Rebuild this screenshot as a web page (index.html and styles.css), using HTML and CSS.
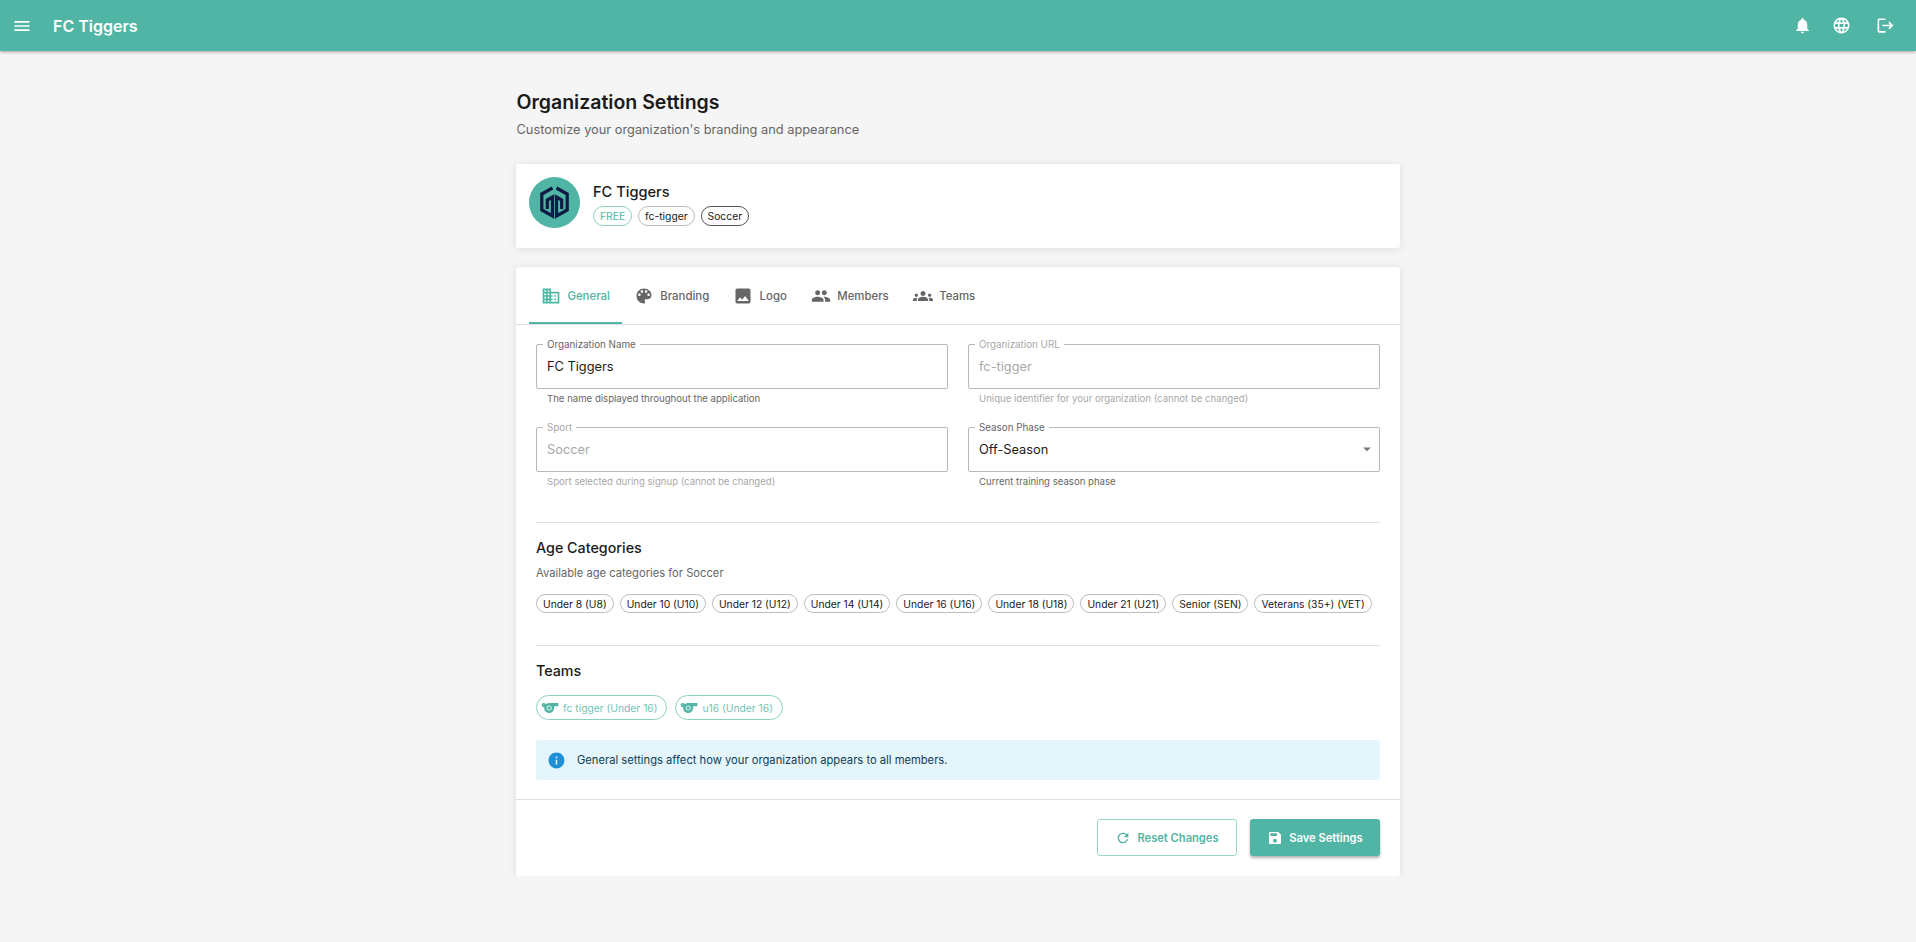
FILE: index.html
```html
<!DOCTYPE html>
<html lang="en">
<head>
  <meta charset="UTF-8">
  <title>Organization Settings</title>
  <link rel="stylesheet" href="styles.css">
</head>
<body>

<header class="appbar">
  <svg class="appbar-menu" viewBox="0 0 24 24"><path d="M3 18h18v-2H3v2zm0-5h18v-2H3v2zm0-7v2h18V6H3z"/></svg>
  <div class="appbar-title">FC Tiggers</div>
  <div class="appbar-actions">
    <svg viewBox="0 0 24 24"><path d="M12 22c1.1 0 2-.9 2-2h-4c0 1.1.89 2 2 2zm6-6v-5c0-3.07-1.64-5.64-4.5-6.32V4c0-.83-.67-1.5-1.5-1.5s-1.5.67-1.5 1.5v.68C7.63 5.36 6 7.92 6 11v5l-2 2v1h16v-1l-2-2z"/></svg>
    <svg viewBox="0 0 24 24"><path d="M11.99 2C6.47 2 2 6.48 2 12s4.47 10 9.99 10C17.52 22 22 17.52 22 12S17.52 2 11.99 2zm6.93 6h-2.95c-.32-1.25-.78-2.45-1.38-3.56 1.84.63 3.37 1.91 4.33 3.56zM12 4.04c.83 1.2 1.48 2.53 1.91 3.96h-3.82c.43-1.43 1.08-2.76 1.91-3.96zM4.26 14C4.1 13.36 4 12.69 4 12s.1-1.36.26-2h3.38c-.08.66-.14 1.32-.14 2 0 .68.06 1.34.14 2H4.26zm.82 2h2.95c.32 1.25.78 2.45 1.38 3.56-1.84-.63-3.37-1.9-4.33-3.56zm2.95-8H5.08c.96-1.66 2.49-2.93 4.33-3.56C8.81 5.55 8.35 6.75 8.03 8zM12 19.96c-.83-1.2-1.48-2.53-1.91-3.96h3.82c-.43 1.43-1.08 2.76-1.91 3.96zM14.34 14H9.66c-.09-.66-.16-1.32-.16-2 0-.68.07-1.35.16-2h4.68c.09.65.16 1.32.16 2 0 .68-.07 1.34-.16 2zm.25 5.56c.6-1.11 1.06-2.31 1.38-3.56h2.95c-.96 1.65-2.49 2.93-4.33 3.56zM16.36 14c.08-.66.14-1.32.14-2 0-.68-.06-1.34-.14-2h3.38c.16.64.26 1.31.26 2s-.1 1.36-.26 2h-3.38z"/></svg>
    <svg class="appbar-logout" viewBox="0 0 24 24"><path d="M17 7l-1.41 1.41L18.17 11H8v2h10.17l-2.58 2.58L17 17l5-5zM4 5h8V3H4c-1.1 0-2 .9-2 2v14c0 1.1.9 2 2 2h8v-2H4V5z"/></svg>
  </div>
</header>

<main class="page">
  <h1 class="page-title">Organization Settings</h1>
  <p class="page-subtitle">Customize your organization's branding and appearance</p>

  <section class="card org-card">
    <div class="org-avatar">
      <svg viewBox="0 0 51 51" fill="none" stroke="#101a45" stroke-width="3.2">
        <path d="M23.5 11 L12.8 17 V33 L23.5 39 V20 L18.3 23 V32"/>
        <path d="M27.5 11 L38.2 17 V33 L27.5 39 V20 L32.7 23 V32"/>
      </svg>
    </div>
    <div class="org-info">
      <div class="org-name">FC Tiggers</div>
      <div class="chip-row">
        <span class="chip chip-free">FREE</span>
        <span class="chip">fc-tigger</span>
        <span class="chip chip-sport">Soccer</span>
      </div>
    </div>
  </section>

  <section class="card settings-card">
    <nav class="tabs">
      <div class="tab active">
        <svg viewBox="0 0 24 24"><path d="M12 7V3H2v18h20V7H12zM6 19H4v-2h2v2zm0-4H4v-2h2v2zm0-4H4V9h2v2zm0-4H4V5h2v2zm4 12H8v-2h2v2zm0-4H8v-2h2v2zm0-4H8V9h2v2zm0-4H8V5h2v2zm10 12h-8v-2h2v-2h-2v-2h2v-2h-2V9h8v10zm-2-8h-2v2h2v-2zm0 4h-2v2h2v-2z"/></svg>
        General
      </div>
      <div class="tab">
        <svg viewBox="0 0 24 24"><path d="M12 3c-4.97 0-9 4.03-9 9s4.03 9 9 9c.83 0 1.5-.67 1.5-1.5 0-.39-.15-.74-.39-1.01-.23-.26-.38-.61-.38-.99 0-.83.67-1.5 1.5-1.5H16c2.76 0 5-2.24 5-5 0-4.42-4.03-8-9-8zm-5.5 9c-.83 0-1.5-.67-1.5-1.5S5.67 9 6.5 9 8 9.67 8 10.5 7.33 12 6.5 12zm3-4C8.67 8 8 7.33 8 6.5S8.67 5 9.5 5s1.5.67 1.5 1.5S10.33 8 9.5 8zm5 0c-.83 0-1.5-.67-1.5-1.5S13.67 5 14.5 5s1.5.67 1.5 1.5S15.33 8 14.5 8zm3 4c-.83 0-1.5-.67-1.5-1.5S16.67 9 17.5 9s1.5.67 1.5 1.5-.67 1.5-1.5 1.5z"/></svg>
        Branding
      </div>
      <div class="tab">
        <svg viewBox="0 0 24 24"><path d="M21 19V5c0-1.1-.9-2-2-2H5c-1.1 0-2 .9-2 2v14c0 1.1.9 2 2 2h14c1.1 0 2-.9 2-2zM8.5 13.5l2.5 3.01L14.5 12l4.5 6H5l3.5-4.5z"/></svg>
        Logo
      </div>
      <div class="tab">
        <svg viewBox="0 0 24 24"><path d="M16 11c1.66 0 2.99-1.34 2.99-3S17.66 5 16 5c-1.66 0-3 1.34-3 3s1.34 3 3 3zm-8 0c1.66 0 2.99-1.34 2.99-3S9.66 5 8 5C6.34 5 5 6.34 5 8s1.34 3 3 3zm0 2c-2.33 0-7 1.17-7 3.5V19h14v-2.5c0-2.33-4.67-3.5-7-3.5zm8 0c-.29 0-.62.02-.97.05 1.16.84 1.97 1.97 1.97 3.45V19h6v-2.5c0-2.33-4.67-3.5-7-3.5z"/></svg>
        Members
      </div>
      <div class="tab">
        <svg viewBox="0 0 24 24"><path d="M12 12.75c1.63 0 3.07.39 4.24.9 1.08.48 1.76 1.56 1.76 2.73V18H6v-1.61c0-1.18.68-2.26 1.76-2.73 1.17-.52 2.61-.91 4.24-.91zM4 13c1.1 0 2-.9 2-2s-.9-2-2-2-2 .9-2 2 .9 2 2 2zm1.13 1.1c-.37-.06-.74-.1-1.13-.1-.99 0-1.93.21-2.78.58C.48 14.9 0 15.62 0 16.43V18h4.5v-1.61c0-.83.23-1.61.63-2.29zM20 13c1.1 0 2-.9 2-2s-.9-2-2-2-2 .9-2 2 .9 2 2 2zm4 3.43c0-.81-.48-1.53-1.22-1.85-.85-.37-1.79-.58-2.78-.58-.39 0-.76.04-1.13.1.4.68.63 1.46.63 2.29V18H24v-1.57zM12 6c1.66 0 3 1.34 3 3s-1.34 3-3 3-3-1.34-3-3 1.34-3 3-3z"/></svg>
        Teams
      </div>
    </nav>

    <div class="settings-body">
      <div class="field-grid">
        <div class="field">
          <div class="field-box">
            <span class="field-label">Organization Name</span>
            <span class="field-value">FC Tiggers</span>
          </div>
          <div class="field-help">The name displayed throughout the application</div>
        </div>
        <div class="field disabled">
          <div class="field-box">
            <span class="field-label">Organization URL</span>
            <span class="field-value">fc-tigger</span>
          </div>
          <div class="field-help">Unique identifier for your organization (cannot be changed)</div>
        </div>
        <div class="field disabled">
          <div class="field-box">
            <span class="field-label">Sport</span>
            <span class="field-value">Soccer</span>
          </div>
          <div class="field-help">Sport selected during signup (cannot be changed)</div>
        </div>
        <div class="field">
          <div class="field-box select">
            <span class="field-label">Season Phase</span>
            <span class="field-value">Off-Season</span>
            <svg class="select-arrow" viewBox="0 0 24 24"><path d="M7 10l5 5 5-5z"/></svg>
          </div>
          <div class="field-help">Current training season phase</div>
        </div>
      </div>

      <hr class="divider first">

      <h2 class="section-title">Age Categories</h2>
      <p class="section-text">Available age categories for Soccer</p>
      <div class="chip-row ages">
        <span class="chip">Under 8 (U8)</span>
        <span class="chip">Under 10 (U10)</span>
        <span class="chip">Under 12 (U12)</span>
        <span class="chip">Under 14 (U14)</span>
        <span class="chip">Under 16 (U16)</span>
        <span class="chip">Under 18 (U18)</span>
        <span class="chip">Under 21 (U21)</span>
        <span class="chip">Senior (SEN)</span>
        <span class="chip">Veterans (35+) (VET)</span>
      </div>

      <hr class="divider">

      <h2 class="section-title">Teams</h2>
      <div class="chip-row teams">
        <span class="chip chip-team">
          <svg viewBox="0 0 24 24"><path d="M11.23 6C9.57 6 8.01 6.66 6.87 7.73 6.54 6.73 5.61 6 4.5 6 3.12 6 2 7.12 2 8.5S3.12 11 4.5 11c.21 0 .41-.03.61-.08-.05.25-.09.51-.1.78-.18 3.68 2.95 6.68 6.68 6.27 2.55-.28 4.68-2.26 5.19-4.77.15-.71.15-1.4.06-2.06-.09-.6.38-1.14.99-1.14H22V6H11.23zM4.5 9c-.28 0-.5-.22-.5-.5s.22-.5.5-.5.5.22.5.5-.22.5-.5.5zm6.5 6c-1.66 0-3-1.34-3-3 0-.85.36-1.62.93-2.17.54-.51 1.27-.83 2.07-.83 1.66 0 3 1.34 3 3s-1.34 3-3 3z"/><circle cx="11" cy="12" r="2"/></svg>
          fc tigger (Under 16)
        </span>
        <span class="chip chip-team">
          <svg viewBox="0 0 24 24"><path d="M11.23 6C9.57 6 8.01 6.66 6.87 7.73 6.54 6.73 5.61 6 4.5 6 3.12 6 2 7.12 2 8.5S3.12 11 4.5 11c.21 0 .41-.03.61-.08-.05.25-.09.51-.1.78-.18 3.68 2.95 6.68 6.68 6.27 2.55-.28 4.68-2.26 5.19-4.77.15-.71.15-1.4.06-2.06-.09-.6.38-1.14.99-1.14H22V6H11.23zM4.5 9c-.28 0-.5-.22-.5-.5s.22-.5.5-.5.5.22.5.5-.22.5-.5.5zm6.5 6c-1.66 0-3-1.34-3-3 0-.85.36-1.62.93-2.17.54-.51 1.27-.83 2.07-.83 1.66 0 3 1.34 3 3s-1.34 3-3 3z"/><circle cx="11" cy="12" r="2"/></svg>
          u16 (Under 16)
        </span>
      </div>

      <div class="alert">
        <svg viewBox="0 0 24 24"><path d="M12 2C6.48 2 2 6.48 2 12s4.48 10 10 10 10-4.48 10-10S17.52 2 12 2zm1 15h-2v-6h2v6zm0-8h-2V7h2v2z"/></svg>
        General settings affect how your organization appears to all members.
      </div>
    </div>

    <footer class="settings-footer">
      <button class="btn btn-outline">
        <svg viewBox="0 0 24 24"><path d="M17.65 6.35C16.2 4.9 14.21 4 12 4c-4.42 0-7.99 3.58-7.99 8s3.57 8 7.99 8c3.73 0 6.84-2.55 7.73-6h-2.08c-.82 2.33-3.04 4-5.65 4-3.31 0-6-2.69-6-6s2.69-6 6-6c1.66 0 3.14.69 4.22 1.78L13 11h7V4l-2.35 2.35z"/></svg>
        Reset Changes
      </button>
      <button class="btn btn-solid">
        <svg viewBox="0 0 24 24"><path d="M17 3H5c-1.11 0-2 .9-2 2v14c0 1.1.89 2 2 2h14c1.1 0 2-.9 2-2V7l-4-4zm-5 16c-1.66 0-3-1.34-3-3s1.34-3 3-3 3 1.34 3 3-1.34 3-3 3zm3-10H5V5h10v4z"/></svg>
        Save Settings
      </button>
    </footer>
  </section>
</main>

</body>
</html>
```

FILE: styles.css
```css
html, body {
  margin: 0;
  padding: 0;
  min-height: 100%;
  background-color: #f5f5f5;
  font-family: Inter, "Liberation Sans", sans-serif;
  color: #1a1a1a;
}

svg {
  fill: currentColor;
  flex-shrink: 0;
}

.appbar {
  height: 51px;
  display: flex;
  align-items: center;
  padding: 0 21px 0 12px;
  background-color: #50b5a4;
  color: white;
  box-shadow: 0 1px 3px rgba(0, 0, 0, 0.35);
}

.appbar-menu {
  width: 20px;
  height: 20px;
}

.appbar-title {
  margin-left: 21px;
  font-size: 16px;
  font-weight: 600;
}

.appbar-actions {
  margin-left: auto;
  display: flex;
  align-items: center;
  gap: 20px;
}

.appbar-actions svg {
  width: 19px;
  height: 19px;
}

.appbar-actions .appbar-logout {
  margin-left: 5px;
}

.page {
  width: 884px;
  margin: 0 auto;
  padding-top: 37px;
}

.page-title {
  margin: 0;
  padding-left: 0.5px;
  font-size: 19.5px;
  line-height: 28px;
  font-weight: 600;
}

.page-subtitle {
  margin: 4px 0 24px;
  padding-left: 0.5px;
  font-size: 12.8px;
  line-height: 20px;
  color: #666;
}

.card {
  background-color: white;
  border-radius: 3px;
  box-shadow: 0 1px 8px rgba(0, 0, 0, 0.1);
}

.org-card {
  height: 84px;
  box-sizing: border-box;
  display: flex;
  gap: 13px;
  padding: 13px;
}

.org-avatar {
  width: 51px;
  height: 51px;
  border-radius: 50%;
  background-color: #50b5a4;
}

.org-avatar svg {
  display: block;
  width: 51px;
  height: 51px;
  fill: none;
}

.org-info {
  padding-top: 5px;
}

.org-name {
  font-size: 14.6px;
  line-height: 20px;
  font-weight: 500;
  margin-bottom: 4px;
}

.chip-row {
  display: flex;
  gap: 6px;
}

.chip {
  display: inline-flex;
  align-items: center;
  box-sizing: border-box;
  height: 19px;
  padding: 0 6px;
  border: 1px solid #bdbdbd;
  border-radius: 10px;
  font-size: 10.3px;
  white-space: nowrap;
}

.org-info .chip {
  height: 20px;
}

.chip-free {
  border-color: #8fd0c5;
  color: #50b5a4;
}

.chip-sport {
  border-color: #555;
}

.settings-card {
  margin-top: 19px;
}

.tabs {
  height: 57px;
  display: flex;
  padding-left: 13px;
  border-bottom: 1px solid #e0e0e0;
}

.tab {
  display: flex;
  align-items: center;
  gap: 6.4px;
  padding: 0 12px;
  font-size: 11.4px;
  font-weight: 500;
  color: #666;
}

.tab svg {
  width: 20px;
  height: 20px;
}

.tab.active {
  color: #50b5a4;
  box-shadow: inset 0 -2px 0 #50b5a4;
}

.settings-body {
  padding: 19px 20px 19px;
  border-bottom: 1px solid #e0e0e0;
}

.field-grid {
  display: grid;
  grid-template-columns: 1fr 1fr;
  gap: 21px 20px;
}

.field-box {
  position: relative;
  box-sizing: border-box;
  height: 45px;
  display: flex;
  align-items: center;
  padding: 0 10px 1px;
  border: 1px solid #b8b8b8;
  border-radius: 2px;
}

.field-label {
  position: absolute;
  top: -6px;
  left: 6px;
  padding: 0 4px;
  background-color: white;
  font-size: 9.8px;
  line-height: 11px;
  color: #666;
}

.field-value {
  font-size: 12.8px;
  color: #1a1a1a;
}

.field-help {
  margin-top: 3px;
  padding-left: 11px;
  font-size: 9.6px;
  line-height: 14px;
  color: #666;
}

.field.disabled .field-label,
.field.disabled .field-value,
.field.disabled .field-help {
  color: #a8a8a8;
}

.select-arrow {
  position: absolute;
  right: 3.5px;
  top: 12px;
  width: 18px;
  height: 18px;
  color: #757575;
}

.divider {
  height: 1px;
  margin: 0;
  border: 0;
  background-color: #e0e0e0;
}

.divider.first {
  margin-top: 33px;
}

.section-title {
  margin: 15px 0 0;
  font-size: 14.3px;
  line-height: 20px;
  font-weight: 500;
}

.section-text {
  margin: 7px 0 0;
  font-size: 11.2px;
  line-height: 16px;
  color: #666;
}

.ages {
  margin-top: 13px;
  margin-bottom: 32px;
}

.teams {
  margin-top: 14px;
  gap: 8px;
}

.chip-team {
  height: 25px;
  border-radius: 13px;
  padding: 0 9px 0 3px;
  gap: 3px;
  border-color: #8fd0c5;
  color: #73c4b6;
}

.chip-team svg {
  width: 20px;
  height: 20px;
  color: #50b5a4;
}

.alert {
  display: flex;
  align-items: center;
  gap: 11px;
  height: 40px;
  margin-top: 20px;
  padding: 0 11px;
  background-color: #e5f5fc;
  border-radius: 3px;
  font-size: 11.2px;
  color: #0f3d55;
}

.alert svg {
  width: 19px;
  height: 19px;
  color: #1e90d8;
}

.settings-footer {
  display: flex;
  justify-content: flex-end;
  gap: 13px;
  padding: 19px 20px 20px;
}

.btn {
  display: flex;
  align-items: center;
  justify-content: center;
  gap: 6px;
  height: 37px;
  box-sizing: border-box;
  border-radius: 3px;
  font-family: inherit;
  font-size: 11.15px;
  font-weight: 600;
}

.btn svg {
  width: 16px;
  height: 16px;
}

.btn-outline {
  width: 140px;
  border: 1px solid #9ad6cb;
  background-color: white;
  color: #50b5a4;
}

.btn-solid {
  width: 130px;
  border: 0;
  background-color: #50b5a4;
  color: white;
  box-shadow: 0 2px 3px rgba(0, 0, 0, 0.3);
}
```
